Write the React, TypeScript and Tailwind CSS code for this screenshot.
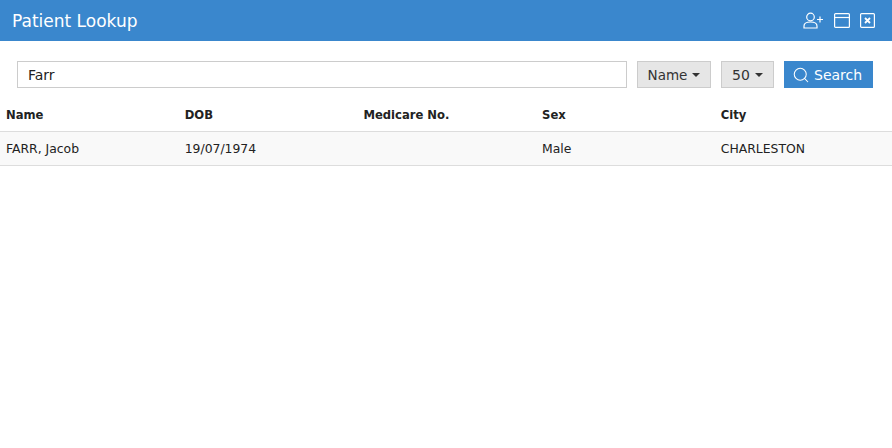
import React from 'react';
import { Search } from 'lucide-react';

const columns = ['Name', 'DOB', 'Medicare No.', 'Sex', 'City'];
const rows = [['FARR, Jacob', '19/07/1974', '', 'Male', 'CHARLESTON']];

function Caret() {
  return <span className="ml-[5px] inline-block h-0 w-0 border-x-[4px] border-t-[4px] border-x-transparent border-t-[#333333]" />;
}

export default function App() {
  return (
    <div className="min-h-[448px] bg-white font-['DejaVu_Sans',sans-serif] text-[#222222]">
      <div className="flex h-[41px] items-center justify-between bg-[#3a87cd] pl-3 pr-[17px] text-white">
        <h1 className="pt-[2px] text-[17px]">Patient Lookup</h1>
        <div className="flex items-center gap-[10px]">
          <svg width="21" height="17" viewBox="0 0 21 17" fill="none" stroke="#ffffff" strokeWidth="1.2">
            <circle cx="7.500" cy="5" r="3.800" />
            <path d="M1 16v-2c0-2.500 2.500-4 6.500-4s6.500 1.500 6.500 4v2z" />
            <path d="M14 7.500h6M17 4.500v6" />
          </svg>
          <svg width="16" height="15" viewBox="0 0 16 15" fill="none" stroke="#ffffff" strokeWidth="1.2">
            <rect x="0.600" y="0.600" width="14.800" height="13.800" rx="1" />
            <path d="M0.600 4.500h14.800" />
          </svg>
          <svg width="15" height="15" viewBox="0 0 15 15" fill="none" stroke="#ffffff" strokeWidth="1.2">
            <rect x="0.600" y="0.600" width="13.800" height="13.800" rx="1" />
            <path d="M5 5l5 5M10 5l-5 5" strokeWidth="1.800" />
          </svg>
        </div>
      </div>

      <div className="flex items-center gap-[10px] pl-[17px] pr-[19px] pt-5">
        <input
          readOnly
          value="Farr"
          className="h-[27px] flex-1 border border-[#cccccc] px-[10px] text-[14px] text-[#222222] outline-none"
        />
        <button className="flex h-[27px] w-[74px] items-center justify-center border border-[#cccccc] bg-[#e6e6e6] pt-px text-[13.500px] text-[#333333]">
          Name
          <Caret />
        </button>
        <button className="flex h-[27px] w-[53px] items-center justify-center border border-[#cccccc] bg-[#e6e6e6] pt-px text-[14px] text-[#333333]">
          50
          <Caret />
        </button>
        <button className="flex h-[27px] w-[89px] items-center gap-[4px] bg-[#3a87cd] pl-2 pt-px text-[14px] text-white">
          <Search size={18} strokeWidth={1.4} />
          Search
        </button>
      </div>

      <table className="mt-[10px] w-full table-fixed border-collapse text-[12.400px]">
        <colgroup>
          <col className="w-[178.700px]" />
          <col className="w-[178.700px]" />
          <col className="w-[178.700px]" />
          <col className="w-[178.700px]" />
          <col />
        </colgroup>
        <thead>
          <tr className="h-[33px] border-b border-[#dddddd]">
            {columns.map((c) => (
              <th key={c} className="px-[6px] pt-[3px] text-left text-[11.600px] font-bold">
                {c}
              </th>
            ))}
          </tr>
        </thead>
        <tbody>
          {rows.map((r) => (
            <tr key={r[0]} className="h-[34px] border-b border-[#dddddd] bg-[#f9f9f9]">
              {r.map((v, i) => (
                <td key={i} className="px-[6px] pt-[3px]">
                  {v}
                </td>
              ))}
            </tr>
          ))}
        </tbody>
      </table>
    </div>
  );
}
